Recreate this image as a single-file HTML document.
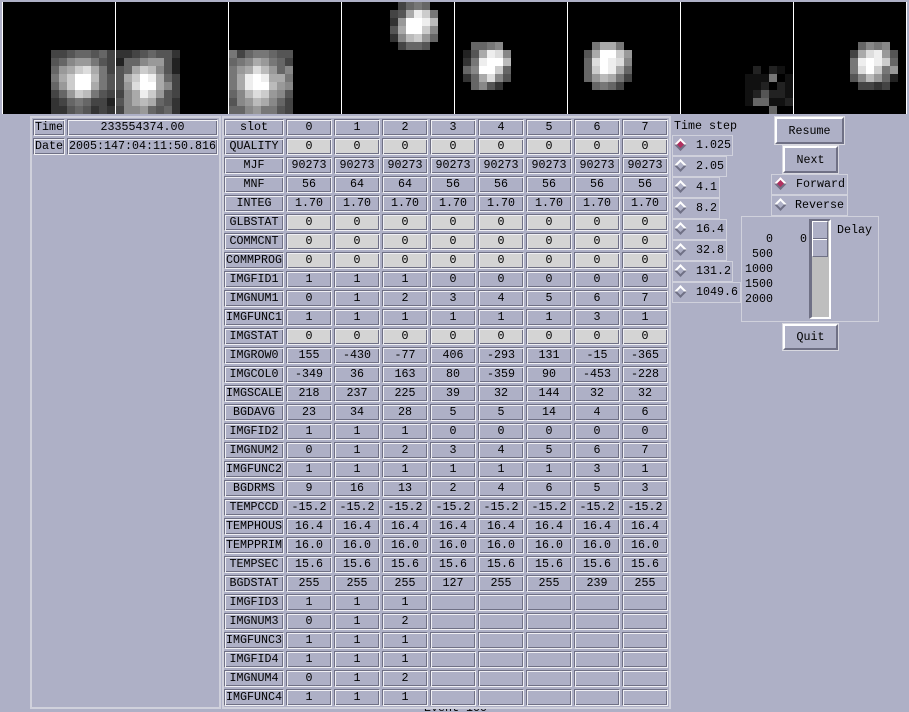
<!DOCTYPE html>
<html><head><meta charset="utf-8"><title>Viewer</title>
<style>
html,body{margin:0;padding:0}
body{width:909px;height:712px;overflow:hidden;background:#aeb0c6;position:relative;font:11.67px/17px "Liberation Mono",monospace;color:#000}
.a{position:absolute}
.w{background:#fff;width:1px;height:112px;top:2px;position:absolute}
.k{background:#000;width:112px;height:112px;top:2px;position:absolute}
.n{position:absolute;display:flex;flex-wrap:wrap}
.n i{display:block;width:8px;height:8px}
.g0{background:#000}.g1{background:#111}.g2{background:#222}.g3{background:#333}.g4{background:#444}.g5{background:#555}.g6{background:#666}.g7{background:#777}.g8{background:#888}.g9{background:#999}.ga{background:#aaa}.gb{background:#bbb}.gc{background:#ccc}.gd{background:#ddd}.ge{background:#eee}.gf{background:#fff}
.f{position:absolute;border:2px solid #d0d1dc;box-sizing:border-box}
#t{position:absolute;left:223px;top:118px;display:grid;grid-template-columns:62px repeat(8,48px);grid-auto-rows:19px}
#t b,#t u,.c{font-weight:normal;text-decoration:none;display:block;margin:1px;box-sizing:border-box;text-align:center;white-space:nowrap;overflow:hidden;line-height:15px;border:1px solid;border-color:#6f7085 #f0f0f4 #f0f0f4 #6f7085;box-shadow:inset 1px 1px 0 #f0f0f4,inset -1px -1px 0 #6f7085}
#t u{background:#d4d4d4}
.c{position:absolute;margin:0}
.r{position:absolute;border:1px solid #d0d1dc;box-sizing:border-box;height:21px}
.r span{position:absolute;top:1px;white-space:pre}
.d{position:absolute;left:3px;top:4px;width:9px;height:9px;box-sizing:border-box;transform:rotate(45deg);border:2px solid;border-color:#fff #6f7085 #6f7085 #fff}
.s{background:#b03060}
.x{position:absolute;box-sizing:border-box;border:1px solid #d8d8e0;text-align:center}
.x div{box-sizing:border-box;height:100%;border:2px solid;border-color:#fff #6f7085 #6f7085 #fff}
.l{position:absolute;width:40px;text-align:right;left:733px}
</style></head><body>
<div class="w" style="left:2px"></div><div class="k" style="left:3px"></div>
<div class="w" style="left:115px"></div><div class="k" style="left:116px"></div>
<div class="w" style="left:228px"></div><div class="k" style="left:229px"></div>
<div class="w" style="left:341px"></div><div class="k" style="left:342px"></div>
<div class="w" style="left:454px"></div><div class="k" style="left:455px"></div>
<div class="w" style="left:567px"></div><div class="k" style="left:568px"></div>
<div class="w" style="left:680px"></div><div class="k" style="left:681px"></div>
<div class="w" style="left:793px"></div><div class="k" style="left:794px"></div>
<div class="w" style="left:906px"></div>

<div class="n" style="left:51px;top:50px;width:64px">
<i class=g4></i><i class=g4></i><i class=g5></i><i class=g6></i><i class=g6></i><i class=g5></i><i class=g6></i><i class=g4></i>
<i class=g5></i><i class=g6></i><i class=g8></i><i class=g9></i><i class=g9></i><i class=g7></i><i class=g5></i><i class=g4></i>
<i class=g6></i><i class=g9></i><i class=ga></i><i class=gc></i><i class=gd></i><i class=ga></i><i class=g7></i><i class=g4></i>
<i class=g7></i><i class=ga></i><i class=gc></i><i class=gf></i><i class=gf></i><i class=gb></i><i class=g7></i><i class=g5></i>
<i class=g6></i><i class=g9></i><i class=gc></i><i class=gf></i><i class=gf></i><i class=ga></i><i class=g7></i><i class=g5></i>
<i class=g4></i><i class=g6></i><i class=g9></i><i class=gc></i><i class=gb></i><i class=g7></i><i class=g5></i><i class=g4></i>
<i class=g3></i><i class=g4></i><i class=g6></i><i class=g7></i><i class=g6></i><i class=g4></i><i class=g4></i><i class=g2></i>
<i class=g3></i><i class=g3></i><i class=g5></i><i class=g6></i><i class=g5></i><i class=g3></i><i class=g4></i><i class=g3></i>
</div>

<div class="n" style="left:116px;top:50px;width:64px">
<i class=g3></i><i class=g3></i><i class=g4></i><i class=g5></i><i class=g6></i><i class=g5></i><i class=g5></i><i class=g3></i>
<i class=g2></i><i class=g6></i><i class=g6></i><i class=g8></i><i class=g9></i><i class=g9></i><i class=g5></i><i class=g2></i>
<i class=g5></i><i class=g6></i><i class=ga></i><i class=gc></i><i class=gb></i><i class=g8></i><i class=g5></i><i class=g2></i>
<i class=g5></i><i class=ga></i><i class=gc></i><i class=gf></i><i class=ge></i><i class=ga></i><i class=g6></i><i class=g4></i>
<i class=g5></i><i class=g9></i><i class=gd></i><i class=gf></i><i class=gf></i><i class=ga></i><i class=g8></i><i class=g4></i>
<i class=g4></i><i class=g8></i><i class=ga></i><i class=ge></i><i class=gc></i><i class=g9></i><i class=g5></i><i class=g4></i>
<i class=g5></i><i class=g8></i><i class=ga></i><i class=gb></i><i class=ga></i><i class=g6></i><i class=g5></i><i class=g3></i>
<i class=g4></i><i class=g8></i><i class=g8></i><i class=g9></i><i class=g6></i><i class=g5></i><i class=g6></i><i class=g3></i>
</div>

<div class="n" style="left:229px;top:50px;width:64px">
<i class=g7></i><i class=g4></i><i class=g6></i><i class=g7></i><i class=g7></i><i class=g6></i><i class=g5></i><i class=g5></i>
<i class=g6></i><i class=g7></i><i class=g8></i><i class=ga></i><i class=g9></i><i class=g7></i><i class=g6></i><i class=g4></i>
<i class=g7></i><i class=g9></i><i class=ga></i><i class=gd></i><i class=gb></i><i class=g9></i><i class=g6></i><i class=g8></i>
<i class=g7></i><i class=ga></i><i class=ge></i><i class=gf></i><i class=ge></i><i class=ga></i><i class=ga></i><i class=g7></i>
<i class=g7></i><i class=ga></i><i class=ge></i><i class=gf></i><i class=gf></i><i class=gb></i><i class=g9></i><i class=g8></i>
<i class=g6></i><i class=g8></i><i class=gb></i><i class=gd></i><i class=gc></i><i class=g9></i><i class=g8></i><i class=g5></i>
<i class=g5></i><i class=g8></i><i class=g9></i><i class=gb></i><i class=ga></i><i class=g8></i><i class=g6></i><i class=g4></i>
<i class=g6></i><i class=g6></i><i class=g8></i><i class=g9></i><i class=g7></i><i class=g7></i><i class=g5></i><i class=g4></i>
</div>

<div class="n" style="left:390px;top:2px;width:48px">
<i class=g0></i><i class=g4></i><i class=g6></i><i class=g7></i><i class=g6></i><i class=g0></i>
<i class=g4></i><i class=g5></i><i class=ga></i><i class=ge></i><i class=gc></i><i class=g7></i>
<i class=g3></i><i class=g9></i><i class=gf></i><i class=gf></i><i class=ge></i><i class=gb></i>
<i class=g5></i><i class=ga></i><i class=gf></i><i class=gf></i><i class=gc></i><i class=g8></i>
<i class=g3></i><i class=g8></i><i class=gb></i><i class=gc></i><i class=g9></i><i class=g6></i>
<i class=g0></i><i class=g4></i><i class=g6></i><i class=g6></i><i class=g5></i><i class=g0></i>
</div>

<div class="n" style="left:463px;top:42px;width:48px">
<i class=g0></i><i class=g6></i><i class=g6></i><i class=g7></i><i class=g8></i><i class=g0></i>
<i class=g2></i><i class=g5></i><i class=ga></i><i class=ge></i><i class=gd></i><i class=g8></i>
<i class=g3></i><i class=g7></i><i class=ge></i><i class=gf></i><i class=gf></i><i class=gb></i>
<i class=g6></i><i class=g8></i><i class=gf></i><i class=gf></i><i class=gc></i><i class=g6></i>
<i class=g3></i><i class=g6></i><i class=ga></i><i class=gd></i><i class=g8></i><i class=g5></i>
<i class=g0></i><i class=g6></i><i class=g8></i><i class=g5></i><i class=g3></i><i class=g0></i>
</div>

<div class="n" style="left:584px;top:42px;width:48px">
<i class=g0></i><i class=g7></i><i class=ga></i><i class=ga></i><i class=g7></i><i class=g0></i>
<i class=g5></i><i class=ga></i><i class=gf></i><i class=gf></i><i class=gc></i><i class=g9></i>
<i class=g6></i><i class=gd></i><i class=gf></i><i class=ge></i><i class=gd></i><i class=g8></i>
<i class=g6></i><i class=gc></i><i class=gf></i><i class=ge></i><i class=ga></i><i class=g6></i>
<i class=g6></i><i class=g9></i><i class=gb></i><i class=ga></i><i class=g7></i><i class=g4></i>
<i class=g0></i><i class=g6></i><i class=g7></i><i class=g6></i><i class=g4></i><i class=g0></i>
</div>

<div class="n" style="left:745px;top:66px;width:48px">
<i class=g0></i><i class=g2></i><i class=g0></i><i class=g2></i><i class=g1></i><i class=g0></i>
<i class=g1></i><i class=g1></i><i class=g1></i><i class=g7></i><i class=g0></i><i class=g1></i>
<i class=g1></i><i class=g1></i><i class=g2></i><i class=g0></i><i class=g2></i><i class=g1></i>
<i class=g1></i><i class=g2></i><i class=g5></i><i class=g2></i><i class=g2></i><i class=g1></i>
<i class=g1></i><i class=g6></i><i class=g6></i><i class=g1></i><i class=g1></i><i class=g2></i>
<i class=g0></i><i class=g0></i><i class=g0></i><i class=g6></i><i class=g0></i><i class=g0></i>
</div>

<div class="n" style="left:850px;top:42px;width:48px">
<i class=g0></i><i class=g6></i><i class=g8></i><i class=g7></i><i class=g8></i><i class=g0></i>
<i class=g4></i><i class=ga></i><i class=gd></i><i class=ge></i><i class=g9></i><i class=g5></i>
<i class=g7></i><i class=ge></i><i class=gf></i><i class=ge></i><i class=gc></i><i class=g6></i>
<i class=g7></i><i class=gd></i><i class=gf></i><i class=gc></i><i class=g7></i><i class=g9></i>
<i class=g5></i><i class=g8></i><i class=gb></i><i class=g9></i><i class=g6></i><i class=g2></i>
<i class=g0></i><i class=g4></i><i class=g4></i><i class=g3></i><i class=g4></i><i class=g0></i>
</div>

<div class="a" style="left:420px;top:708px;width:70px;height:4px;overflow:hidden"><div class="a" style="left:4px;top:-7px;white-space:pre;line-height:14px">Event 100</div></div>

<div class="f" style="left:30px;top:116px;width:191px;height:593px"></div>
<div class="f" style="left:222px;top:116px;width:449px;height:593px"></div>

<div class="c" style="left:33px;top:119px;width:32px;height:17px">Time</div>
<div class="c" style="left:67px;top:119px;width:151px;height:17px">233554374.00</div>
<div class="c" style="left:33px;top:138px;width:32px;height:17px">Date</div>
<div class="c" style="left:67px;top:138px;width:151px;height:17px">2005:147:04:11:50.816</div>

<div id="t">
<b>slot</b><b>0</b><b>1</b><b>2</b><b>3</b><b>4</b><b>5</b><b>6</b><b>7</b>
<b>QUALITY</b><u>0</u><u>0</u><u>0</u><u>0</u><u>0</u><u>0</u><u>0</u><u>0</u>
<b>MJF</b><b>90273</b><b>90273</b><b>90273</b><b>90273</b><b>90273</b><b>90273</b><b>90273</b><b>90273</b>
<b>MNF</b><b>56</b><b>64</b><b>64</b><b>56</b><b>56</b><b>56</b><b>56</b><b>56</b>
<b>INTEG</b><b>1.70</b><b>1.70</b><b>1.70</b><b>1.70</b><b>1.70</b><b>1.70</b><b>1.70</b><b>1.70</b>
<b>GLBSTAT</b><u>0</u><u>0</u><u>0</u><u>0</u><u>0</u><u>0</u><u>0</u><u>0</u>
<b>COMMCNT</b><u>0</u><u>0</u><u>0</u><u>0</u><u>0</u><u>0</u><u>0</u><u>0</u>
<b>COMMPROG</b><u>0</u><u>0</u><u>0</u><u>0</u><u>0</u><u>0</u><u>0</u><u>0</u>
<b>IMGFID1</b><b>1</b><b>1</b><b>1</b><b>0</b><b>0</b><b>0</b><b>0</b><b>0</b>
<b>IMGNUM1</b><b>0</b><b>1</b><b>2</b><b>3</b><b>4</b><b>5</b><b>6</b><b>7</b>
<b>IMGFUNC1</b><b>1</b><b>1</b><b>1</b><b>1</b><b>1</b><b>1</b><b>3</b><b>1</b>
<b>IMGSTAT</b><u>0</u><u>0</u><u>0</u><u>0</u><u>0</u><u>0</u><u>0</u><u>0</u>
<b>IMGROW0</b><b>155</b><b>-430</b><b>-77</b><b>406</b><b>-293</b><b>131</b><b>-15</b><b>-365</b>
<b>IMGCOL0</b><b>-349</b><b>36</b><b>163</b><b>80</b><b>-359</b><b>90</b><b>-453</b><b>-228</b>
<b>IMGSCALE</b><b>218</b><b>237</b><b>225</b><b>39</b><b>32</b><b>144</b><b>32</b><b>32</b>
<b>BGDAVG</b><b>23</b><b>34</b><b>28</b><b>5</b><b>5</b><b>14</b><b>4</b><b>6</b>
<b>IMGFID2</b><b>1</b><b>1</b><b>1</b><b>0</b><b>0</b><b>0</b><b>0</b><b>0</b>
<b>IMGNUM2</b><b>0</b><b>1</b><b>2</b><b>3</b><b>4</b><b>5</b><b>6</b><b>7</b>
<b>IMGFUNC2</b><b>1</b><b>1</b><b>1</b><b>1</b><b>1</b><b>1</b><b>3</b><b>1</b>
<b>BGDRMS</b><b>9</b><b>16</b><b>13</b><b>2</b><b>4</b><b>6</b><b>5</b><b>3</b>
<b>TEMPCCD</b><b>-15.2</b><b>-15.2</b><b>-15.2</b><b>-15.2</b><b>-15.2</b><b>-15.2</b><b>-15.2</b><b>-15.2</b>
<b>TEMPHOUS</b><b>16.4</b><b>16.4</b><b>16.4</b><b>16.4</b><b>16.4</b><b>16.4</b><b>16.4</b><b>16.4</b>
<b>TEMPPRIM</b><b>16.0</b><b>16.0</b><b>16.0</b><b>16.0</b><b>16.0</b><b>16.0</b><b>16.0</b><b>16.0</b>
<b>TEMPSEC</b><b>15.6</b><b>15.6</b><b>15.6</b><b>15.6</b><b>15.6</b><b>15.6</b><b>15.6</b><b>15.6</b>
<b>BGDSTAT</b><b>255</b><b>255</b><b>255</b><b>127</b><b>255</b><b>255</b><b>239</b><b>255</b>
<b>IMGFID3</b><b>1</b><b>1</b><b>1</b><b></b><b></b><b></b><b></b><b></b>
<b>IMGNUM3</b><b>0</b><b>1</b><b>2</b><b></b><b></b><b></b><b></b><b></b>
<b>IMGFUNC3</b><b>1</b><b>1</b><b>1</b><b></b><b></b><b></b><b></b><b></b>
<b>IMGFID4</b><b>1</b><b>1</b><b>1</b><b></b><b></b><b></b><b></b><b></b>
<b>IMGNUM4</b><b>0</b><b>1</b><b>2</b><b></b><b></b><b></b><b></b><b></b>
<b>IMGFUNC4</b><b>1</b><b>1</b><b>1</b><b></b><b></b><b></b><b></b><b></b>
</div>

<div class="a" style="left:674px;top:118px;white-space:pre">Time step</div>
<div class="r" style="left:672px;top:135px;width:61px"><div class="d s"></div><span style="left:23px">1.025</span></div>
<div class="r" style="left:672px;top:156px;width:55px"><div class="d"></div><span style="left:23px">2.05</span></div>
<div class="r" style="left:672px;top:177px;width:48px"><div class="d"></div><span style="left:23px">4.1</span></div>
<div class="r" style="left:672px;top:198px;width:48px"><div class="d"></div><span style="left:23px">8.2</span></div>
<div class="r" style="left:672px;top:219px;width:55px"><div class="d"></div><span style="left:23px">16.4</span></div>
<div class="r" style="left:672px;top:240px;width:55px"><div class="d"></div><span style="left:23px">32.8</span></div>
<div class="r" style="left:672px;top:261px;width:61px"><div class="d"></div><span style="left:23px">131.2</span></div>
<div class="r" style="left:672px;top:282px;width:69px"><div class="d"></div><span style="left:23px">1049.6</span></div>

<div class="x" style="left:774px;top:116px;width:71px;height:29px"><div style="line-height:24px">Resume</div></div>
<div class="x" style="left:782px;top:145px;width:57px;height:29px"><div style="line-height:24px">Next</div></div>
<div class="r" style="left:771px;top:174px;width:77px"><div class="d s" style="left:4px"></div><span style="left:24px">Forward</span></div>
<div class="r" style="left:771px;top:195px;width:77px"><div class="d" style="left:4px"></div><span style="left:23px">Reverse</span></div>

<div class="f" style="left:741px;top:216px;width:138px;height:106px;border-width:1px"></div>
<div class="l" style="top:231px">0</div>
<div class="l" style="top:246px">500</div>
<div class="l" style="top:261px">1000</div>
<div class="l" style="top:276px">1500</div>
<div class="l" style="top:291px">2000</div>
<div class="a" style="left:800px;top:231px">0</div>
<div class="a" style="left:837px;top:222px;white-space:pre">Delay</div>
<div class="a" style="left:809px;top:219px;width:22px;height:100px;box-sizing:border-box;background:#bebebe;border:solid;border-width:2px 2px 2px 3px;border-color:#6f7085 #fff #fff #6f7085"></div>
<div class="a" style="left:812px;top:221px;width:16px;height:36px;box-sizing:border-box;background:#aeb0c6;border:1px solid;border-color:#fff #6f7085 #6f7085 #fff"></div>
<div class="a" style="left:813px;top:239px;width:14px;height:1px;background:#fff"></div>
<div class="a" style="left:813px;top:238px;width:14px;height:1px;background:#6f7085"></div>

<div class="x" style="left:782px;top:323px;width:57px;height:28px"><div style="line-height:23px">Quit</div></div>
</body></html>
